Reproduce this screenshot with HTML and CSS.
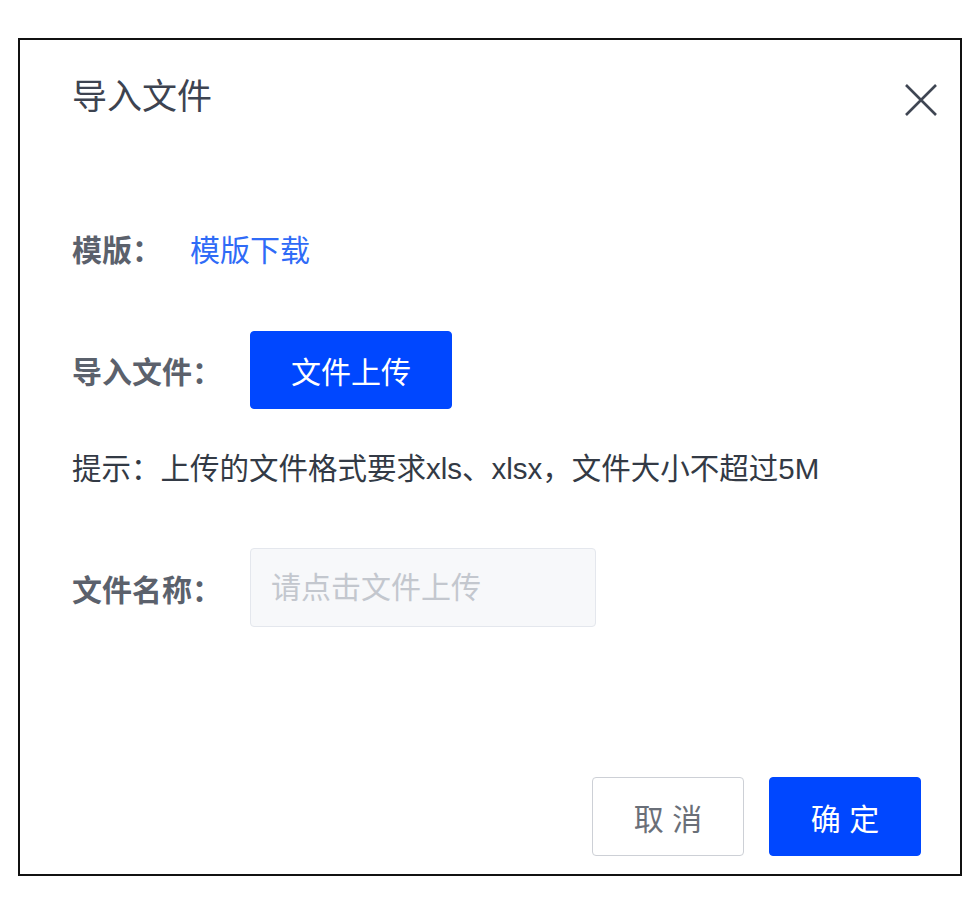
FILE: index.html
```html
<!DOCTYPE html>
<html>
  <head>
    <meta charset="utf-8">
    <link rel="stylesheet" href="styles.css">
  </head>
  <body>
    <div class="dialog">
      <div class="dialog-header">
        <span class="dialog-title">导入文件</span>
        <svg class="close-icon" width="36" height="36" viewBox="0 0 36 36">
          <path d="M3 3 L33 33 M33 3 L3 33" stroke="#3f4653" stroke-width="2.6" fill="none" />
        </svg>
      </div>

      <div class="dialog-body">
        <div class="form-row row-template">
          <span class="form-label">模版：</span>
          <a class="link">模版下载</a>
        </div>

        <div class="form-row row-upload">
          <span class="form-label">导入文件：</span>
          <button class="btn btn-primary btn-upload">文件上传</button>
        </div>

        <div class="hint">提示：上传的文件格式要求xls、xlsx，文件大小不超过5M</div>

        <div class="form-row row-name">
          <span class="form-label">文件名称：</span>
          <div class="input">请点击文件上传</div>
        </div>
      </div>

      <div class="dialog-footer">
        <button class="btn btn-default">取 消</button>
        <button class="btn btn-primary">确 定</button>
      </div>
    </div>
  </body>
</html>
```

FILE: styles.css
```css
body {
  margin: 0;
  background-color: #fff;
  font-family: "Liberation Sans", "Noto Sans CJK SC", sans-serif;
  color: #333;
}

.dialog {
  margin: 38px 0 0 18px;
  width: 940px;
  height: 834px;
  border: 2px solid #111;
  display: flex;
  flex-direction: column;
  background-color: #fff;
}

.dialog-header {
  display: flex;
  justify-content: space-between;
  align-items: center;
  padding: 36px 21px 0 52px;
  height: 42px;
}

.dialog-title {
  font-size: 35px;
  line-height: 40px;
  color: #3d4350;
}

.close-icon {
  margin-top: 6px;
}

.dialog-body {
  padding: 0 39px 0 52px;
  display: flex;
  flex-direction: column;
}

.form-row {
  display: flex;
  align-items: center;
}

.row-template {
  margin-top: 110px;
  height: 40px;
}

.row-upload {
  margin-top: 63px;
}

.row-name {
  margin-top: 59px;
}

.form-label {
  font-size: 30px;
  font-weight: bold;
  color: #5b616c;
  margin-right: 28px;
}

.link {
  font-size: 30px;
  color: #2f6bf7;
  cursor: pointer;
}

.btn {
  font-family: "Liberation Sans", "Noto Sans CJK SC", sans-serif;
  font-size: 30px;
  border-radius: 4px;
  cursor: pointer;
  height: 79px;
}

.btn-primary {
  background-color: #0047ff;
  border: 1px solid #0047ff;
  color: #fff;
}

.btn-default {
  background-color: #fff;
  border: 1px solid #cdd0d6;
  color: #6a6f78;
}

.btn-upload {
  width: 202px;
  height: 78px;
}

.hint {
  margin-top: 40px;
  font-size: 29.5px;
  line-height: 40px;
  color: #333a45;
}

.input {
  width: 324px;
  height: 77px;
  line-height: 77px;
  padding-left: 20px;
  background-color: #f7f8fa;
  border: 1px solid #e4e7ed;
  border-radius: 4px;
  font-size: 30px;
  color: #c3c7ce;
}

.dialog-footer {
  margin-top: auto;
  display: flex;
  justify-content: flex-end;
  gap: 25px;
  padding: 0 39px 18px 0;
}

.dialog-footer .btn {
  width: 152px;
}
```
